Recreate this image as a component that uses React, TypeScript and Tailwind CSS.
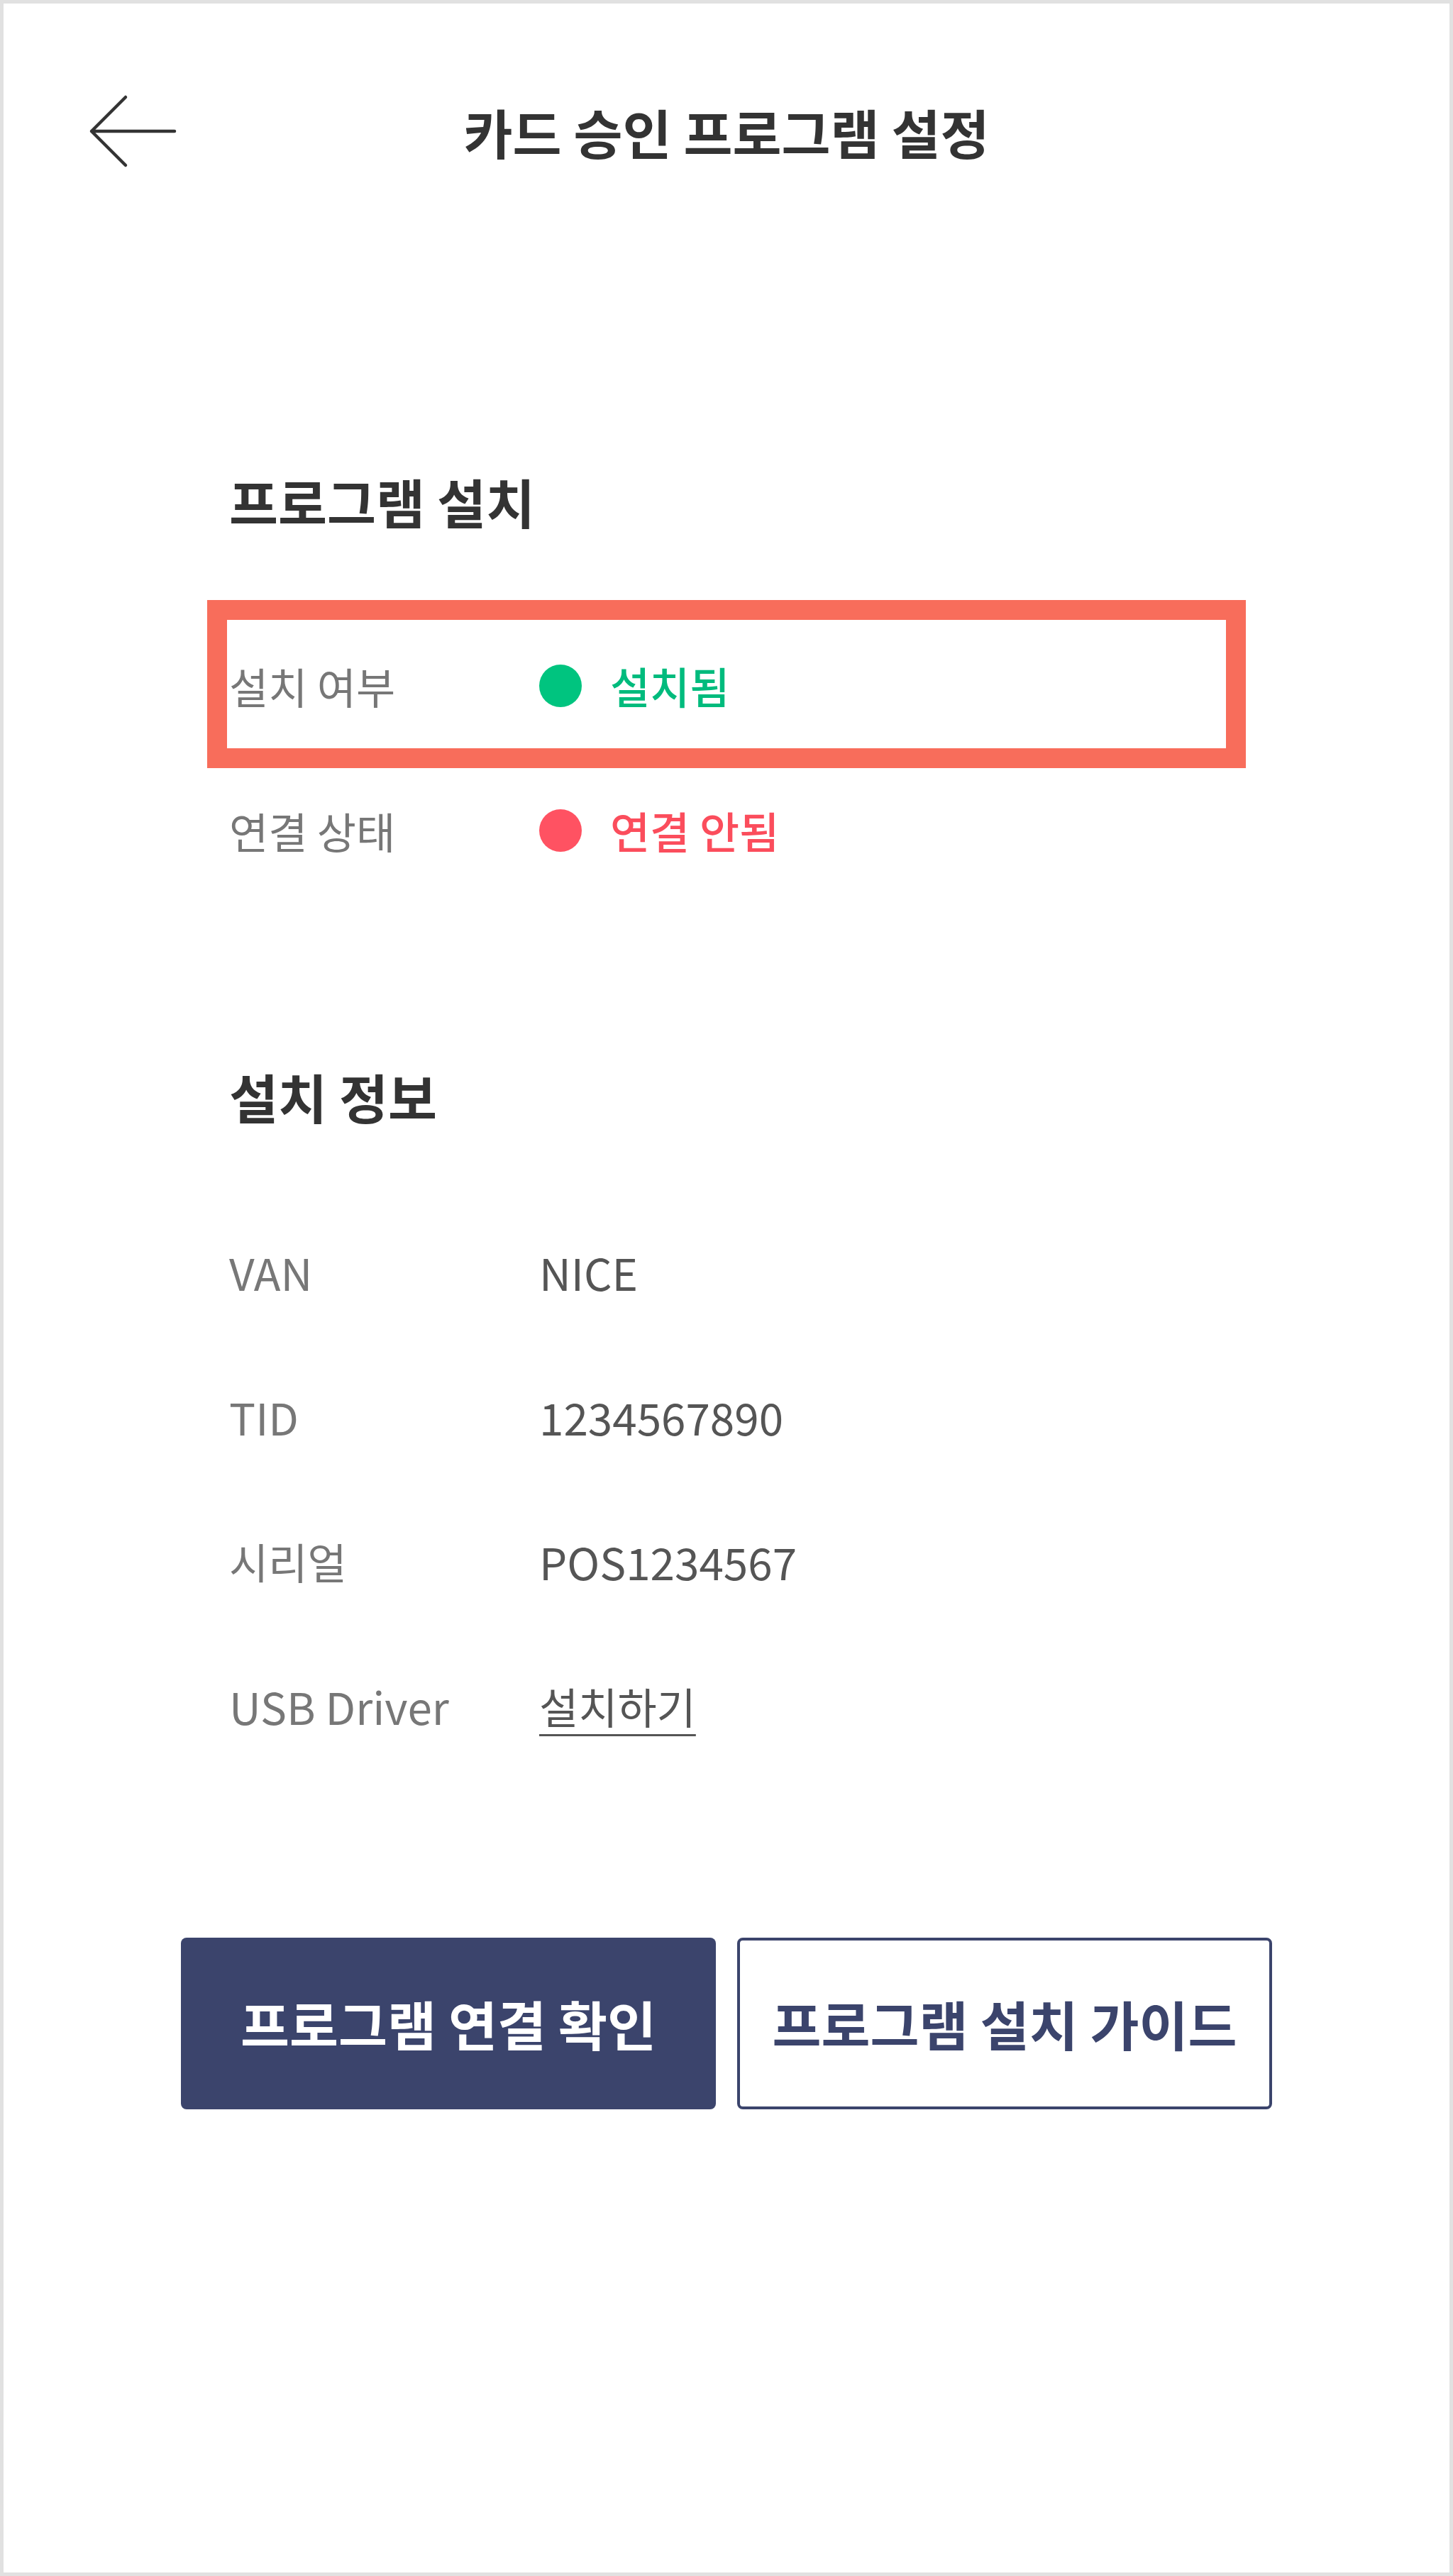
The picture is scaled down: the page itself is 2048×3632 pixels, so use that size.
import React from 'react';

const FONT = { fontFamily: '"Noto Sans CJK KR", "Noto Sans", sans-serif' };

type Status = 'ok' | 'bad';

const statusRows: { label: string; value: string; status: Status }[] = [
  { label: '설치 여부', value: '설치됨', status: 'ok' },
  { label: '연결 상태', value: '연결 안됨', status: 'bad' },
];

const infoRows: { label: string; value: string; latinLabel?: boolean; latinValue?: boolean; link?: boolean }[] = [
  { label: 'VAN', value: 'NICE', latinLabel: true, latinValue: true },
  { label: 'TID', value: '1234567890', latinLabel: true, latinValue: true },
  { label: '시리얼', value: 'POS1234567', latinValue: true },
  { label: 'USB Driver', value: '설치하기', latinLabel: true, link: true },
];

function BackArrow() {
  return (
    <svg width="124" height="104" viewBox="0 0 124 104" fill="none">
      <path d="M52 4 L4 52 L52 100 M4 52 H121" stroke="#333333" strokeWidth={4.5} strokeLinecap="round" strokeLinejoin="round" />
    </svg>
  );
}

function StatusDot({ status }: { status: Status }) {
  return (
    <span
      className={`block h-[60px] w-[60px] shrink-0 rounded-full ${status === 'ok' ? 'bg-[#00c47f]' : 'bg-[#ff5262]'}`}
    />
  );
}

export default function App() {
  return (
    <div className="h-[3632px] w-full border-[5px] border-[#e1e1e1] bg-white" style={FONT}>
      {/* header */}
      <div className="grid h-[360px] grid-cols-[1fr_auto_1fr] items-center">
        <div className="pl-[120px]">
          <BackArrow />
        </div>
        <h1 className="text-[75px] leading-none font-bold text-[#333333]">카드 승인 프로그램 설정</h1>
        <div />
      </div>

      <div className="mx-auto w-[1538px]">
        {/* 프로그램 설치 */}
        <section className="mt-[292px]">
          <h2 className="flex h-[100px] items-center px-[68px] text-[75px] font-bold text-[#333333]">프로그램 설치</h2>
          <div className="mt-[108px]">
            {statusRows.map((row, i) => (
              <div key={row.label} className="relative flex h-[204px] items-center px-[68px]">
                {i === 0 && (
                  <div className="pointer-events-none absolute top-[-19px] right-[37px] bottom-[-14px] left-[37px] border-[28px] border-[#f86d5b]" />
                )}
                <span className="w-[437px] text-[60px] text-[#777777]">{row.label}</span>
                <div className="flex items-center gap-[40px]">
                  <StatusDot status={row.status} />
                  <span className={`text-[61px] font-medium ${row.status === 'ok' ? 'text-[#00bb7d]' : 'text-[#fb4d5c]'}`}>
                    {row.value}
                  </span>
                </div>
              </div>
            ))}
          </div>
        </section>

        {/* 설치 정보 */}
        <section className="mt-[223px]">
          <h2 className="flex h-[100px] items-center px-[68px] text-[75px] font-bold text-[#333333]">설치 정보</h2>
          <div className="mt-[95px]">
            {infoRows.map((row) => (
              <div key={row.label} className="flex h-[204px] items-center px-[68px]">
                <span className={`w-[437px] text-[#777777] ${row.latinLabel ? 'text-[62px]' : 'text-[60px]'}`}>
                  {row.label}
                </span>
                {row.link ? (
                  <a className="text-[60px] text-[#555555] underline decoration-[3px] underline-offset-[14px]">{row.value}</a>
                ) : (
                  <span className={`text-[#555555] ${row.latinValue ? 'text-[62px]' : 'text-[60px]'}`}>{row.value}</span>
                )}
              </div>
            ))}
          </div>
        </section>

        {/* buttons */}
        <div className="mt-[225px] grid grid-cols-2 gap-[30px]">
          <button className="flex h-[242px] items-center justify-center rounded-[8px] bg-[#3b446c] text-[75px] font-bold text-white">
            프로그램 연결 확인
          </button>
          <button className="flex h-[242px] items-center justify-center rounded-[8px] border-[4px] border-[#3b446c] bg-white text-[75px] font-bold text-[#3b446c]">
            프로그램 설치 가이드
          </button>
        </div>
      </div>
    </div>
  );
}
